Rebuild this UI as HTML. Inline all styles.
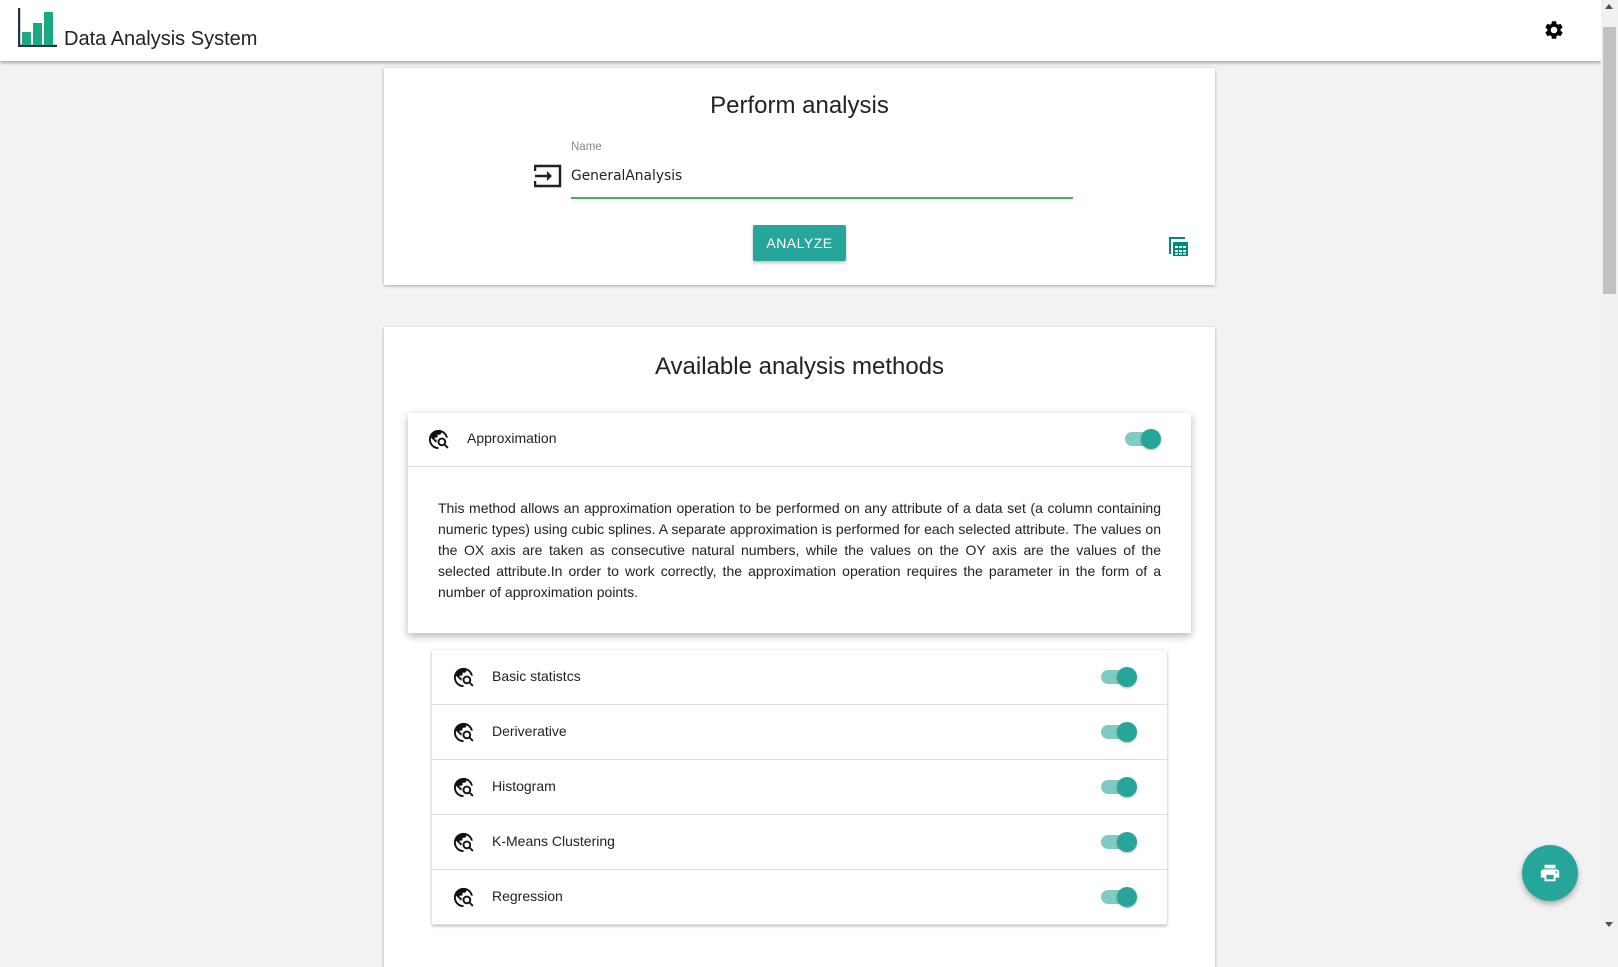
<!DOCTYPE html>
<html><head><meta charset="utf-8"><style>
*{box-sizing:border-box;margin:0;padding:0}
html,body{width:1618px;height:930px;overflow:hidden;background:#f2f2f2;font-family:"Liberation Sans",Arial,sans-serif;color:#222}
.hdr{position:absolute;left:0;top:0;width:1601px;height:61px;background:#fff;box-shadow:0 2px 3px rgba(0,0,0,.3)}
.title{position:absolute;left:64px;top:28px;font-size:20px;color:#222}
.sb{position:absolute;left:1601px;top:0;width:17px;height:930px;background:#f1f1f1}
.thumb{position:absolute;left:2px;top:27px;width:13px;height:267px;background:#c1c1c1}
.card{position:absolute;background:#fff;box-shadow:0 1px 3px rgba(0,0,0,.3)}
h2{position:absolute;left:0;right:0;text-align:center;font-weight:normal;font-size:24px;color:#222}
.tog{position:absolute;width:38px;height:22px}
.tog .tr{position:absolute;left:1px;top:4px;width:34px;height:14px;border-radius:7px;background:#80cbc4}
.tog .kn{position:absolute;left:17px;top:1px;width:20px;height:20px;border-radius:50%;background:#26a69a;box-shadow:0 1px 2px rgba(0,0,0,.3)}
.row{position:absolute;left:0;width:735px;height:55px;border-bottom:1px solid #ddd}
.row .lbl{position:absolute;left:60px;top:18px;font-size:14px}
.row svg{position:absolute;left:20px;top:16px}
.row .tog{left:668px;top:16px}
</style></head><body>
<div class="hdr">
<svg style="position:absolute;left:18px;top:8px" width="40" height="39" viewBox="0 0 40 39"><path d="M1 0V38H39" stroke="#2a3246" stroke-width="2.5" fill="none"/><rect x="4" y="24" width="9" height="13" fill="#1aaa80"/><rect x="15" y="15" width="9" height="22" fill="#1aaa80"/><rect x="26" y="4" width="9" height="33" fill="#1aaa80"/></svg>
<div class="title">Data Analysis System</div>
<svg style="position:absolute;left:1543px;top:19px" width="22" height="22" viewBox="0 0 24 24"><path fill="#000" d="M19.14 12.94c.04-.3.06-.61.06-.94 0-.32-.02-.64-.07-.94l2.030-1.58a.49.49 0 0 0 .12-.61l-1.92-3.32a.488.488 0 0 0-.59-.22l-2.39.96c-.5-.38-1.03-.7-1.62-.94l-.36-2.54a.484.484 0 0 0-.48-.41h-3.84c-.24 0-.43.17-.47.41l-.36 2.54c-.59.24-1.13.57-1.62.94l-2.39-.96c-.22-.08-.47 0-.59.22L2.74 8.87c-.12.21-.08.47.12.61l2.03 1.58c-.05.3-.09.63-.09.94s.02.64.07.94l-2.03 1.58a.49.49 0 0 0-.12.61l1.92 3.32c.12.22.37.29.59.22l2.39-.96c.5.38 1.03.7 1.62.94l.36 2.54c.05.24.24.41.48.41h3.84c.24 0 .44-.17.47-.41l.36-2.54c.59-.24 1.130-.56 1.62-.94l2.39.96c.22.08.47 0 .59-.22l1.92-3.32c.12-.22.07-.47-.12-.61l-2.01-1.58zM12 15.6c-1.98 0-3.6-1.62-3.6-3.6s1.62-3.6 3.6-3.6 3.6 1.62 3.6 3.6-1.62 3.6-3.6 3.6z"/></svg>
</div>
<div class="sb"><div style="position:absolute;left:4px;top:4px;border:4px solid transparent;border-bottom:5px solid #505050;border-top:0"></div><div class="thumb"></div><div style="position:absolute;left:4px;top:922px;border:4px solid transparent;border-top:5px solid #505050;border-bottom:0"></div></div>

<div class="card" style="left:384px;top:68px;width:831px;height:217px">
<h2 style="top:24px">Perform analysis</h2>
<div style="position:absolute;left:187px;top:73px;font-size:11.5px;color:#888">Name</div>
<svg style="position:absolute;left:150px;top:96px" width="28" height="24" viewBox="0 0 28 24"><path d="M1 7V2H26V22H1V17" stroke="#222" stroke-width="2.5" fill="none"/><path d="M1 12H17" stroke="#222" stroke-width="2.5"/><path d="M13 7L18 12L13 17Z" fill="#222"/></svg>
<div style="position:absolute;left:187px;top:100px;color:#222;font-family:'DejaVu Sans','Liberation Sans',sans-serif;font-size:13.8px">GeneralAnalysis</div>
<div style="position:absolute;left:187px;top:129px;width:502px;height:2px;background:#4caf50"></div>
<div style="position:absolute;left:369px;top:157px;width:93px;height:36px;background:#26a69a;color:#fff;font-size:14px;letter-spacing:.5px;text-align:center;line-height:36px;border-radius:2px;box-shadow:0 2px 3px rgba(0,0,0,.25)">ANALYZE</div>
<svg style="position:absolute;left:785px;top:169px" width="20" height="20" viewBox="0 0 20 20"><path d="M1 17V1H16" stroke="#00897b" stroke-width="2" fill="none"/><rect x="4" y="5" width="15" height="14" fill="#00897b"/><g fill="#fff"><rect x="6" y="9" width="3" height="2"/><rect x="10" y="9" width="3" height="2"/><rect x="14" y="9" width="3" height="2"/><rect x="6" y="13" width="3" height="2"/><rect x="10" y="13" width="3" height="2"/><rect x="14" y="13" width="3" height="2"/><rect x="6" y="16" width="3" height="1.5"/><rect x="10" y="16" width="3" height="1.5"/><rect x="14" y="16" width="3" height="1.5"/></g></svg>
</div>

<div class="card" style="left:384px;top:327px;width:831px;height:640px">
<h2 style="top:26px">Available analysis methods</h2>
</div>

<svg width="0" height="0" style="position:absolute"><defs><symbol id="ic" viewBox="0 0 24 24"><path fill="#111" d="M19.3 16.9c.4-.7.7-1.5.7-2.4 0-2.5-2-4.5-4.5-4.5S11 12 11 14.5s2 4.5 4.5 4.5c.9 0 1.7-.3 2.4-.7l3.2 3.2 1.4-1.4-3.2-3.2zm-3.8.1c-1.4 0-2.5-1.1-2.5-2.5s1.1-2.5 2.5-2.5 2.5 1.1 2.5 2.5-1.1 2.5-2.5 2.5zM12 20v2C6.48 22 2 17.52 2 12S6.48 2 12 2c4.84 0 8.87 3.44 9.8 8h-2.07c-.64-2.46-2.4-4.47-4.73-5.41V5c0 1.1-.9 2-2 2h-2v2c0 .55-.45 1-1 1H8v2h2v3H9l-4.79-4.79C4.08 10.79 4 11.38 4 12c0 4.41 3.59 8 8 8z"/></symbol></defs></svg>

<div class="card" style="left:408px;top:413px;width:783px;height:220px;box-shadow:0 3px 8px rgba(0,0,0,.3)">
<div style="position:absolute;left:0;top:0;width:100%;height:54px;border-bottom:1px solid #ddd"></div>
<svg style="position:absolute;left:19px;top:15px" width="23" height="23"><use href="#ic"/></svg>
<div style="position:absolute;left:59px;top:17px;font-size:14px">Approximation</div>
<div class="tog" style="left:716px;top:15px"><div class="tr"></div><div class="kn"></div></div>
<div style="position:absolute;left:30px;top:85px;width:723px;font-size:14px;line-height:21px;text-align:justify;color:#222">This method allows an approximation operation to be performed on any attribute of a data set (a column containing numeric types) using cubic splines. A separate approximation is performed for each selected attribute. The values on the OX axis are taken as consecutive natural numbers, while the values on the OY axis are the values of the selected attribute.In order to work correctly, the approximation operation requires the parameter in the form of a number of approximation points.</div>
</div>

<div class="card" style="left:432px;top:650px;width:735px;height:275px">
<div class="row" style="top:0"><svg width="23" height="23"><use href="#ic"/></svg><div class="lbl">Basic statistcs</div><div class="tog"><div class="tr"></div><div class="kn"></div></div></div>
<div class="row" style="top:55px"><svg width="23" height="23"><use href="#ic"/></svg><div class="lbl">Deriverative</div><div class="tog"><div class="tr"></div><div class="kn"></div></div></div>
<div class="row" style="top:110px"><svg width="23" height="23"><use href="#ic"/></svg><div class="lbl">Histogram</div><div class="tog"><div class="tr"></div><div class="kn"></div></div></div>
<div class="row" style="top:165px"><svg width="23" height="23"><use href="#ic"/></svg><div class="lbl">K-Means Clustering</div><div class="tog"><div class="tr"></div><div class="kn"></div></div></div>
<div class="row" style="top:220px"><svg width="23" height="23"><use href="#ic"/></svg><div class="lbl">Regression</div><div class="tog"><div class="tr"></div><div class="kn"></div></div></div>
</div>

<div style="position:absolute;left:1522px;top:845px;width:56px;height:56px;border-radius:50%;background:#26a69a;box-shadow:0 3px 6px rgba(0,0,0,.3)">
<svg style="position:absolute;left:17px;top:17px" width="22" height="22" viewBox="0 0 24 24"><path fill="#fff" d="M19 8H5c-1.66 0-3 1.34-3 3v6h4v4h12v-4h4v-6c0-1.66-1.34-3-3-3zm-3 11H8v-5h8v5zm3-7c-.55 0-1-.45-1-1s.45-1 1-1 1 .45 1 1-.45 1-1 1zm-1-9H6v4h12V3z"/></svg>
</div>
</body></html>
